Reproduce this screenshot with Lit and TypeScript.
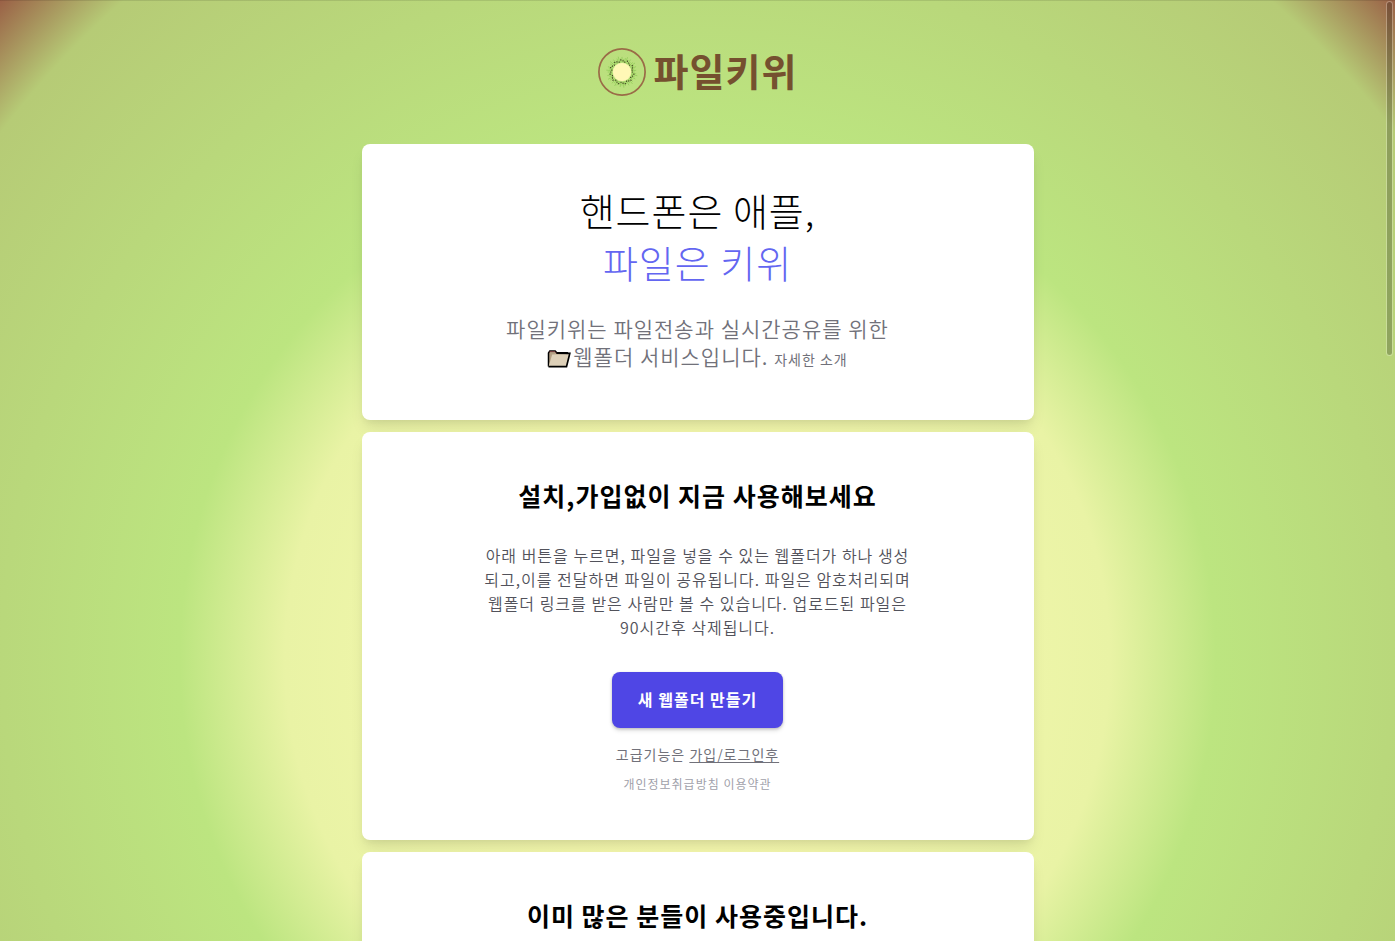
import { LitElement, html, css, svg } from "lit";
import { customElement } from "lit/decorators.js";

const SEEDS = Array.from({ length: 34 }, (_, i) => i);
const RAYS = Array.from({ length: 52 }, (_, i) => i);

@customElement("kiwi-logo")
class KiwiLogo extends LitElement {
  static styles = css`
    :host {
      display: block;
      width: 48px;
      height: 48px;
    }
    .logo {
      display: block;
    }
  `;

  render() {
    return html`<svg class="logo" width="48" height="48" viewBox="0 0 48 48" aria-hidden="true">
      <circle cx="24" cy="24" r="23.1" fill="none" stroke="#9a6b47" stroke-width="1.7" />
      ${RAYS.map((i) => {
        const a = (i * Math.PI * 2) / RAYS.length;
        const r = 12.8 + ((i * 7) % 5) * 0.75;
        return svg`<line x1=${24 + 9 * Math.cos(a)} y1=${24 + 9 * Math.sin(a)}
          x2=${24 + r * Math.cos(a)} y2=${24 + r * Math.sin(a)}
          stroke="#8cc853" stroke-width=".7" />`;
      })}
      <circle cx="24" cy="24" r="9.6" fill="#d9eb98" />
      ${SEEDS.map((i) => {
        const a = (i * Math.PI * 2) / SEEDS.length;
        const r = 10.3 + ((i * 5) % 3) * 0.9;
        return svg`<circle cx=${24 + r * Math.cos(a)} cy=${24 + r * Math.sin(a)} r=".6" fill="#2f2413" />`;
      })}
      <circle cx="24" cy="24" r="9" fill="#fff8b6" />
    </svg>`;
  }
}

@customElement("app-root")
class AppRoot extends LitElement {
  static styles = css`
    :host {
      display: block;
      position: relative;
      height: 100vh;
      overflow: hidden;
      box-sizing: border-box;
      font-family: "Noto Sans CJK KR", "Noto Sans", sans-serif;
      letter-spacing: 1px;
      color: #000;
      background: radial-gradient(
          circle at 50% 70%,
          #fffcb4 0%,
          #e9f3a5 43%,
          #bce580 54%,
          #b6cb76 91%,
          #9a6046 100%
        )
        border-box;
      border-top: 1px solid rgba(0, 0, 0, 0.1);
    }
    .page {
      display: flex;
      flex-direction: column;
      align-items: center;
      gap: 48px;
      padding: 47px 24px 0;
    }
    .brand {
      display: flex;
      align-items: flex-start;
      gap: 8px;
      color: #75502f;
      text-decoration: none;
    }
    .brand-name {
      margin: 0;
      font-size: 38px;
      line-height: 44px;
      font-weight: 700;
    }
    .cards {
      display: flex;
      flex-direction: column;
      gap: 12px;
      width: 100%;
      max-width: 672px;
    }
    .card {
      display: flex;
      flex-direction: column;
      align-items: center;
      box-sizing: border-box;
      padding: 44px 24px 48px;
      border-radius: 8px;
      background: #fff;
      text-align: center;
      box-shadow: 0 10px 15px -3px rgba(0, 0, 0, 0.1), 0 4px 6px -2px rgba(0, 0, 0, 0.05);
    }
    .hero {
      padding: 40px 24px 50px;
    }
    .headline {
      margin: 0;
      font-size: 38px;
      line-height: 52px;
      font-weight: 300;
    }
    .accent {
      color: #6366f1;
    }
    .lead {
      margin: 26px 0 0;
      font-size: 21px;
      line-height: 28px;
      font-weight: 350;
      color: #71717a;
    }
    .folder {
      display: inline-block;
      margin-right: 2px;
      vertical-align: -4px;
    }
    .more {
      font-size: 14px;
      line-height: 16px;
      font-weight: 400;
      color: inherit;
      text-decoration: none;
    }
    .title {
      margin: 0;
      font-size: 25px;
      line-height: 38px;
      font-weight: 700;
    }
    .body {
      margin: 29px 0 33px;
      font-size: 16px;
      line-height: 24px;
      font-weight: 350;
      color: #52525b;
    }
    .create {
      height: 56px;
      padding: 0 26px 2px;
      border: 0;
      border-radius: 8px;
      background: #4f46e5;
      color: #fff;
      font: inherit;
      font-size: 16px;
      font-weight: 700;
      letter-spacing: inherit;
      box-shadow: 0 1px 3px rgba(0, 0, 0, 0.2), 0 3px 4px rgba(0, 0, 0, 0.1);
    }
    .note {
      margin: 16px 0 0;
      font-size: 14px;
      line-height: 20px;
      color: #71717a;
    }
    .note a {
      color: inherit;
      text-underline-offset: 2px;
    }
    .legal {
      margin: 12px 0 0;
      font-size: 12px;
      line-height: 16px;
    }
    .legal a {
      color: #a1a1aa;
      text-decoration: none;
    }
    .scroll-thumb {
      position: absolute;
      top: 0;
      right: 2px;
      width: 5px;
      height: 353px;
      border: 1px solid rgba(255, 255, 255, 0.25);
      border-radius: 4px;
      background: rgba(0, 0, 0, 0.22);
      background-clip: padding-box;
    }
  `;

  render() {
    return html`
      <div class="page">
        <a class="brand" href="#">
          <kiwi-logo></kiwi-logo>
          <h1 class="brand-name">파일키위</h1>
        </a>
        <main class="cards">
          <section class="card hero">
            <h2 class="headline">핸드폰은 애플,<br /><span class="accent">파일은 키위</span></h2>
            <p class="lead">
              파일키위는 파일전송과 실시간공유를 위한<br />
              <svg class="folder" width="24" height="20" viewBox="0 0 24 20" aria-hidden="true">
                <path d="M1.5 17.5V4l1.3-2h5.4l1.6 1.8h10.4v3" fill="#b3a084" stroke="#000" stroke-width="1.5" />
                <path d="M2.2 3.4 3 2.6h5l1.4 1.6" fill="none" stroke="#7a4040" stroke-width="1" />
                <path d="M1.6 17.6 5.2 5.6 22.8 5l-3.2 12.6z" fill="#ddd0b8" />
                <path d="M9.5 4.2 22.8 4.4l-3.3 13.2H1.5" fill="none" stroke="#000" stroke-width="1.7" />
              </svg>웹폴더 서비스입니다.
              <a class="more" href="#">자세한 소개</a>
            </p>
          </section>
          <section class="card">
            <h2 class="title">설치,가입없이 지금 사용해보세요</h2>
            <p class="body">
              아래 버튼을 누르면, 파일을 넣을 수 있는 웹폴더가 하나 생성<br />되고,이를 전달하면 파일이 공유됩니다. 파일은
              암호처리되며<br />웹폴더 링크를 받은 사람만 볼 수 있습니다. 업로드된 파일은<br />90시간후 삭제됩니다.
            </p>
            <button class="create" type="button">새 웹폴더 만들기</button>
            <p class="note">고급기능은 <a href="#">가입/로그인후</a></p>
            <p class="legal"><a href="#">개인정보취급방침</a> <a href="#">이용약관</a></p>
          </section>
          <section class="card">
            <h2 class="title">이미 많은 분들이 사용중입니다.</h2>
          </section>
        </main>
      </div>
      <div class="scroll-thumb"></div>
    `;
  }
}
